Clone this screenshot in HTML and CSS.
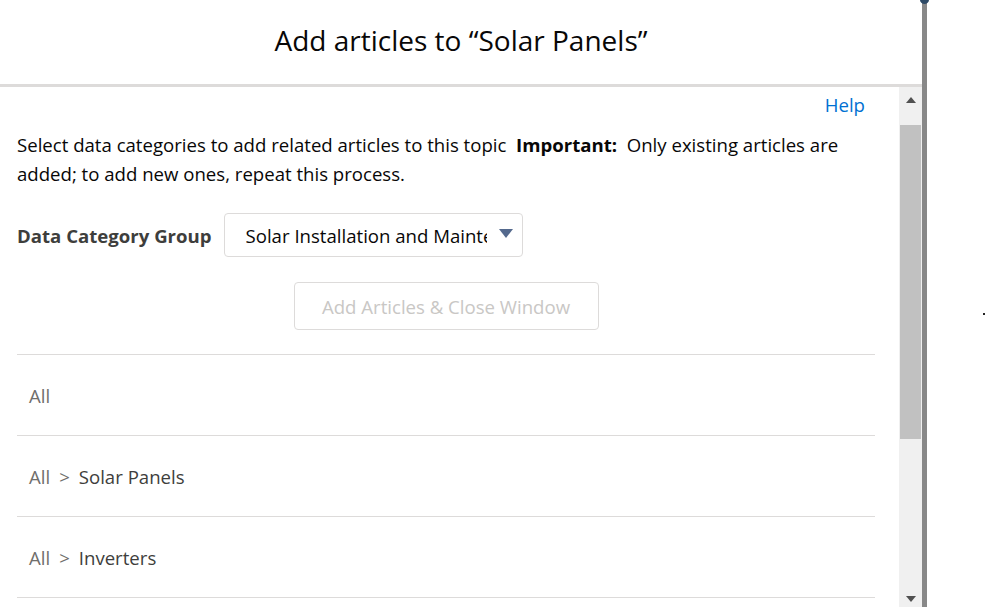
FILE: index.html
```html
<!DOCTYPE html>
<html lang="en">
<head>
    <meta charset="UTF-8">
    <title>Add articles to “Solar Panels”</title>
    <link rel="stylesheet" href="styles.css">
</head>
<body>
    <div class="page">
        <div class="modal">
            <div class="modal-header">
                <h2>Add articles to “Solar Panels”</h2>
            </div>
            <div class="modal-body">
                <div class="content">
                    <div class="help-row"><a href="#" class="help">Help</a></div>
                    <p class="intro">Select data categories to add related articles to this topic&nbsp; <b>Important:</b>&nbsp; Only existing articles are added; to add new ones, repeat this process.</p>
                    <div class="group-row">
                        <label for="group">Data Category Group</label>
                        <div class="select" id="group">
                            <span class="select-text">Solar Installation and Maintenance</span>
                            <span class="caret"></span>
                        </div>
                    </div>
                    <div class="actions">
                        <button disabled>Add Articles &amp; Close Window</button>
                    </div>
                    <ul class="categories">
                        <li><span class="crumb">All</span></li>
                        <li><span class="crumb">All</span><span class="sep">&gt;</span><span class="name">Solar Panels</span></li>
                        <li><span class="crumb">All</span><span class="sep">&gt;</span><span class="name">Inverters</span></li>
                    </ul>
                </div>
                <div class="scrollbar">
                    <span class="arrow up"></span>
                    <span class="thumb"></span>
                    <span class="arrow down"></span>
                </div>
            </div>
        </div>
        <div class="edge"><span class="knob"></span></div>
        <div class="side"><span class="dot"></span></div>
    </div>
</body>
</html>
```

FILE: styles.css
```css
html, body {
    margin: 0;
    height: 100%;
    overflow: hidden;
}
body {
    font-family: "Open Sans", "Noto Sans", sans-serif;
    background: #fff;
    color: #16325c;
}
.page {
    display: flex;
    height: 607px;
}
.modal {
    width: 922px;
    display: flex;
    flex-direction: column;
    background: #fff;
}
.modal-header {
    height: 84px;
    border-bottom: 3px solid #dddbda;
    display: flex;
    align-items: center;
    justify-content: center;
    flex-shrink: 0;
}
.modal-header h2 {
    margin: 0;
    font-weight: 400;
    font-size: 28px;
    color: #080707;
    padding-bottom: 4px;
}
.modal-body {
    flex: 1;
    display: flex;
    overflow: hidden;
}
.content {
    flex: 1;
    padding: 0 24px 0 17px;
    overflow: hidden;
}
.help-row {
    display: flex;
    justify-content: flex-end;
    padding: 5px 10px 0 0;
}
.help {
    color: #0070d2;
    text-decoration: none;
    font-size: 18.6px;
}
.intro {
    margin: 13px 0 0;
    font-size: 18.6px;
    line-height: 29px;
    color: #080707;
}
.intro b {
    font-weight: 700;
}
.group-row {
    display: flex;
    align-items: center;
    gap: 12px;
    margin-top: 25px;
}
.group-row label {
    font-weight: 700;
    font-size: 18.6px;
    color: #3e3e3c;
}
.select {
    width: 299px;
    height: 44px;
    box-sizing: border-box;
    border: 1px solid #dddbda;
    border-radius: 4px;
    display: flex;
    align-items: center;
    padding: 0 9px 0 21px;
}
.select-text {
    width: 241px;
    overflow: hidden;
    white-space: nowrap;
    font-size: 18.6px;
    color: #080707;
}
.caret {
    margin-left: auto;
    margin-bottom: 3px;
    width: 0;
    height: 0;
    border-left: 7px solid transparent;
    border-right: 7px solid transparent;
    border-top: 9px solid #54698d;
}
.actions {
    display: flex;
    justify-content: center;
    margin-top: 25px;
}
.actions button {
    width: 305px;
    height: 48px;
    background: #fff;
    border: 1px solid #dddbda;
    border-radius: 4px;
    color: #c9c7c5;
    font-family: inherit;
    font-size: 18.6px;
}
.categories {
    list-style: none;
    margin: 24px 0 0;
    padding: 0;
    border-top: 1px solid #dddbda;
}
.categories li {
    height: 80px;
    border-bottom: 1px solid #dddbda;
    display: flex;
    align-items: center;
    padding-left: 12px;
    font-size: 18.6px;
}
.crumb {
    color: #706e6b;
}
.sep {
    color: #706e6b;
    margin: 0 9px;
}
.name {
    color: #3e3e3c;
}
.scrollbar {
    width: 23px;
    background: #f0f0f0;
    display: flex;
    flex-direction: column;
    align-items: center;
    flex-shrink: 0;
}
.arrow {
    width: 0;
    height: 0;
    border-left: 5px solid transparent;
    border-right: 5px solid transparent;
}
.arrow.up {
    border-bottom: 6px solid #505050;
    margin: 10px 0 22px;
}
.arrow.down {
    border-top: 6px solid #505050;
    margin: auto 0 5px;
}
.thumb {
    width: 21px;
    height: 314px;
    background: #c1c1c1;
}
.edge {
    width: 5px;
    background: #888;
    position: relative;
}
.knob {
    position: absolute;
    left: -2px;
    top: -4px;
    width: 9px;
    height: 8px;
    border-radius: 50%;
    background: #2e4a66;
}
.side {
    flex: 1;
    position: relative;
}
.dot {
    position: absolute;
    left: 56px;
    top: 313px;
    width: 2px;
    height: 2px;
    background: #222;
}
```
